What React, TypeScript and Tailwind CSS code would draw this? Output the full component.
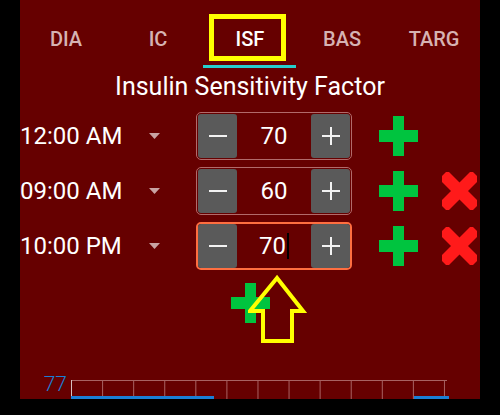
import React from "react";

const tabs = ["DIA", "IC", "ISF", "BAS", "TARG"];

const rows = [
  { time: "12:00 AM", value: "70", removable: false, focused: false },
  { time: "09:00 AM", value: "60", removable: true, focused: false },
  { time: "10:00 PM", value: "70", removable: true, focused: true },
];

const GreenPlus = () => (
  <svg width="39" height="40" viewBox="0 0 39 40">
    <path d="M14 0h11v14h14v12H25v14H14V26H0V14h14z" fill="#00c43f" />
  </svg>
);

const RedCross = () => (
  <svg width="35" height="38" viewBox="0 0 35 38">
    <g transform="translate(17.5 19) rotate(45)">
      <rect x="-6" y="-23" width="12" height="46" fill="#ff1a1a" />
    </g>
    <g transform="translate(17.5 19) rotate(-45)">
      <rect x="-6" y="-23" width="12" height="46" fill="#ff1a1a" />
    </g>
  </svg>
);

const Stepper = ({ value, focused }: { value: string; focused: boolean }) => (
  <div
    className={
      focused
        ? "flex h-[48px] w-[156px] rounded-[5px] border-2 border-[#ff6e40]"
        : "flex h-[48px] w-[156px] rounded-[5px] border border-[#b26a6a] p-[1px]"
    }
  >
    <div className="flex w-[39px] items-center justify-center rounded-[3px] bg-[#5a5a5a]">
      <div className="h-[2px] w-[18px] bg-[#f2f2f2]" />
    </div>
    <div className="flex flex-1 items-center justify-center text-[24px] leading-none text-white">
      {value}
      {focused && <span className="ml-[1px] inline-block h-[26px] w-[2px] bg-black" />}
    </div>
    <div className="flex w-[39px] items-center justify-center rounded-[3px] bg-[#5a5a5a]">
      <svg width="18" height="18" viewBox="0 0 18 18">
        <path d="M9 0v18M0 9h18" stroke="#f2f2f2" strokeWidth="2" />
      </svg>
    </div>
  </div>
);

const Graph = () => {
  const step = 31.08;
  return (
    <div className="mt-auto flex h-[19px] items-start">
      <div className="-mt-[6px] w-[51px] pr-[4px] text-right text-[21px] font-light leading-none text-[#1a7fd6]">
        77
      </div>
      <svg width="380" height="19" viewBox="0 0 380 19">
        <line x1="0" y1="0.5" x2="376" y2="0.5" stroke="#a86262" strokeWidth="1" />
        {Array.from({ length: 13 }).map((_, i) => (
          <line
            key={i}
            x1={i * step + 0.5}
            y1="0"
            x2={i * step + 0.5}
            y2="19"
            stroke={i === 0 ? "#d8c0c0" : "#a86262"}
            strokeWidth="1"
          />
        ))}
        <rect x="0" y="16" width="143" height="3" fill="#1a7fd6" />
        <rect x="343" y="16" width="35" height="3" fill="#1a7fd6" />
      </svg>
    </div>
  );
};

export default function App() {
  return (
    <div className="flex h-[415px] w-[500px] bg-black font-['Roboto',sans-serif]">
      <div className="relative ml-[20px] flex h-[399px] w-[460px] flex-col overflow-hidden bg-[#660000]">
        <div className="flex h-[68px]">
          {tabs.map((t) => (
            <div key={t} className="relative flex-1 pt-[29px] text-center">
              <span
                className={
                  t === "ISF"
                    ? "text-[20px] font-medium leading-[20px] text-white"
                    : "text-[20px] font-medium leading-[20px] text-[#d6b3b3]"
                }
              >
                {t}
              </span>
              {t === "ISF" && (
                <div className="absolute bottom-0 left-[-1px] right-0 h-[3px] bg-[#26cfcc]" />
              )}
            </div>
          ))}
        </div>

        <div className="h-[44px] pt-[5px] text-center text-[25px] leading-[28px] text-white">
          Insulin Sensitivity Factor
        </div>

        <div className="flex flex-col gap-[7px]">
          {rows.map((r) => (
            <div key={r.time} className="flex h-[48px] items-center">
              <div className="w-[129px] whitespace-nowrap text-[24px] leading-none text-white">
                {r.time}
              </div>
              <svg width="11" height="6" viewBox="0 0 11 6">
                <path d="M0 0h11L5.5 6z" fill="#c9a3a3" />
              </svg>
              <div className="w-[36px]" />
              <Stepper value={r.value} focused={r.focused} />
              <div className="ml-[27px] flex">
                <GreenPlus />
              </div>
              {r.removable && (
                <div className="ml-[24px] flex">
                  <RedCross />
                </div>
              )}
            </div>
          ))}
        </div>

        <div className="mt-[13px] flex justify-center">
          <GreenPlus />
        </div>

        <Graph />

        {/* annotation overlays */}
        <div className="absolute left-[189px] top-[14px] h-[47px] w-[77px] border-[5px] border-[#ffff00]" />
        <svg
          className="absolute left-[228px] top-[274px]"
          width="80"
          height="72"
          viewBox="0 0 80 72"
        >
          <polygon
            points="29,4 2,37 15,37 15,67 44,67 44,37 55,37"
            fill="none"
            stroke="#ffff00"
            strokeWidth="4"
            strokeLinejoin="miter"
          />
        </svg>
      </div>
    </div>
  );
}
